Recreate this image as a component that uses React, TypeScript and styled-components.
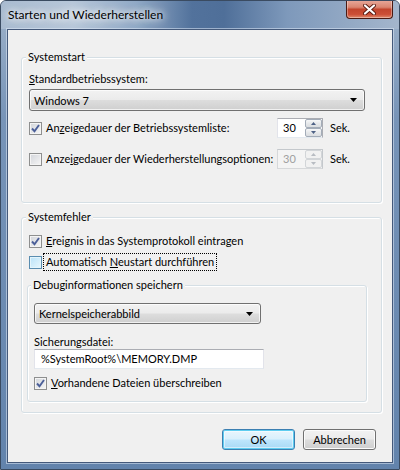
import React from 'react';
import styled, { createGlobalStyle, css } from 'styled-components';

const GlobalStyle = createGlobalStyle`
  html, body {
    margin: 0;
    padding: 0;
    background: #ffffff;
  }
  body {
    font-family: Lato, "Liberation Sans", sans-serif;
    font-size: 11px;
    color: #000;
  }
`;

const Window = styled.div`
  width: 400px;
  height: 470px;
  box-sizing: border-box;
  display: flex;
  flex-direction: column;
  border: 1px solid #3a4b61;
  border-radius: 6px 6px 0 0;
  background: linear-gradient(180deg, #9fb3ca 0%, #7794b8 25%, #6283ac 100%);
  overflow: hidden;
`;

const TitleBar = styled.div`
  height: 28px;
  flex: none;
  display: flex;
  align-items: flex-start;
  background: linear-gradient(
    90deg,
    #a9bbd0 0%,
    #b7c7d9 18%,
    #90a9c6 34%,
    #52729c 48%,
    #4f6f99 56%,
    #7e99bb 72%,
    #a4b6cc 100%
  );
`;

const Title = styled.div`
  flex: 1;
  padding-left: 7px;
  line-height: 28px;
  font-size: 12px;
  color: #000;
  text-shadow: 0 0 6px #fff, 0 0 10px rgba(255, 255, 255, 0.9), 0 0 14px rgba(255, 255, 255, 0.7);
`;

const CloseButton = styled.div`
  width: 47px;
  height: 19px;
  margin: -1px 6px 0 0;
  box-sizing: border-box;
  display: flex;
  align-items: center;
  justify-content: center;
  border: 1px solid #4a1a12;
  border-top: none;
  border-radius: 0 0 4px 4px;
  background: linear-gradient(180deg, #e8aa9c 0%, #d98570 40%, #c2452d 52%, #cc4f36 80%, #df8a6c 100%);
  box-shadow: inset 0 0 0 1px rgba(255, 255, 255, 0.35);
`;

const Body = styled.div`
  flex: 1;
  display: flex;
  padding: 0 6px 6px;
  min-height: 0;
`;

const Client = styled.div`
  flex: 1;
  display: flex;
  flex-direction: column;
  background: #f0f0f0;
  border: 1px solid #44597a;
  box-shadow: 0 0 0 1px rgba(220, 232, 245, 0.55);
  padding: 20px 10px 0 13px;
`;

const GroupBox = styled.fieldset<{ $top: number; $bottom: number; $left: number; $width?: number; $gap?: number; $shift?: number }>`
  margin: ${({ $gap = 0 }) => $gap}px 0 0 ${({ $shift = 0 }) => $shift}px;
  min-width: 0;
  width: ${({ $width }) => ($width ? `${$width}px` : 'auto')};
  box-sizing: border-box;
  border: 1px solid #d5dfe5;
  border-radius: 3px;
  box-shadow: inset 1px 1px 0 #fff, 1px 1px 0 #fff;
  padding: ${({ $top, $bottom, $left }) => `${$top}px 8px ${$bottom}px ${$left}px`};
  display: flex;
  flex-direction: column;
`;

const Legend = styled.legend`
  padding: 0 2px;
  margin-left: -3px;
  line-height: 14px;
  background: #f0f0f0;
`;

const Label = styled.div<{ $gap?: number }>`
  line-height: 14px;
  height: 14px;
  margin-top: ${({ $gap = 0 }) => $gap}px;
`;

const Key = styled.span`
  text-decoration: underline;
`;

const Combo = styled.div<{ $width?: number; $height: number; $gap?: number; $trail?: number }>`
  height: ${({ $height }) => $height}px;
  width: ${({ $width }) => ($width ? `${$width}px` : 'auto')};
  margin: ${({ $gap = 0 }) => $gap}px ${({ $trail = 0 }) => $trail}px 0 0;
  box-sizing: border-box;
  display: flex;
  align-items: center;
  padding: 0 7px 0 4px;
  border: 1px solid #707070;
  border-radius: 3px;
  background: linear-gradient(180deg, #f2f2f2 0%, #ebebeb 48%, #dddddd 52%, #cfcfcf 100%);
  box-shadow: inset 0 0 0 1px rgba(255, 255, 255, 0.7);
`;

const ComboText = styled.span`
  flex: 1;
`;

const CheckRow = styled.div<{ $gap?: number; $height?: number }>`
  display: flex;
  align-items: center;
  height: ${({ $height = 18 }) => $height}px;
  margin-top: ${({ $gap = 0 }) => $gap}px;
  white-space: nowrap;
`;

const TimeRow = styled.div<{ $gap?: number }>`
  display: grid;
  grid-template-columns: 241px 46px auto;
  column-gap: 7px;
  align-items: center;
  height: 20px;
  margin-top: ${({ $gap = 0 }) => $gap}px;
`;

const CheckLabel = styled.span<{ $focused?: boolean }>`
  margin-left: 3px;
  line-height: 14px;
  padding: 0 1px;
  ${({ $focused }) =>
    $focused &&
    css`
      outline: 1px dotted #000;
      outline-offset: 1px;
    `}
`;

const Box = styled.span<{ $hover?: boolean }>`
  width: 13px;
  height: 13px;
  flex: none;
  box-sizing: border-box;
  display: flex;
  align-items: center;
  justify-content: center;
  border: 1px solid ${({ $hover }) => ($hover ? '#5a8db0' : '#8e8f8f')};
  box-shadow: inset 0 0 0 1px ${({ $hover }) => ($hover ? '#e4f5fc' : '#f4f4f4')};
  background: ${({ $hover }) =>
    $hover
      ? 'linear-gradient(135deg, #b9e2f8 0%, #e8f7fd 100%)'
      : 'linear-gradient(135deg, #d2d5da 0%, #f6f6f6 100%)'};
`;

const SpinBox = styled.div<{ $disabled?: boolean }>`
  height: 20px;
  box-sizing: border-box;
  display: flex;
  border: 1px solid ${({ $disabled }) => ($disabled ? '#c4c8cc' : '#abadb3')};
  border-left-color: ${({ $disabled }) => ($disabled ? '#d6d8da' : '#e2e3ea')};
  border-bottom-color: ${({ $disabled }) => ($disabled ? '#d6d8da' : '#e3e9ef')};
  background: ${({ $disabled }) => ($disabled ? '#f4f4f4' : '#fff')};
  color: ${({ $disabled }) => ($disabled ? '#a0a0a0' : '#000')};
`;

const SpinValue = styled.span`
  flex: 1;
  padding-left: 5px;
  line-height: 18px;
`;

const SpinButtons = styled.div`
  width: 17px;
  display: flex;
  flex-direction: column;
`;

const SpinHalf = styled.div<{ $disabled?: boolean }>`
  flex: 1;
  display: flex;
  align-items: center;
  justify-content: center;
  border: 1px solid ${({ $disabled }) => ($disabled ? '#d2d5d8' : '#a3acb8')};
  border-radius: 2px;
  background: ${({ $disabled }) =>
    $disabled ? '#f1f1f1' : 'linear-gradient(180deg, #f6f7f8 0%, #e6e8ea 50%, #dadde0 100%)'};
`;

const Unit = styled.span`
  line-height: 14px;
`;

const TextField = styled.div<{ $width: number }>`
  width: ${({ $width }) => $width}px;
  height: 20px;
  box-sizing: border-box;
  padding-left: 6px;
  line-height: 18px;
  background: #fff;
  border: 1px solid #e2e3ea;
  border-top-color: #abadb3;
  border-bottom-color: #e3e9ef;
`;

const Footer = styled.div`
  display: flex;
  justify-content: flex-end;
  gap: 8px;
  margin-top: 16px;
  padding-right: 6px;
`;

const Button = styled.div<{ $default?: boolean }>`
  width: 73px;
  height: 21px;
  box-sizing: border-box;
  display: flex;
  align-items: center;
  justify-content: center;
  border-radius: 3px;
  ${({ $default }) =>
    $default
      ? css`
          border: 1px solid #3c7fb1;
          background: linear-gradient(180deg, #eaf6fd 0%, #d9f0fc 48%, #bee6fd 52%, #a7d9f5 100%);
          box-shadow: inset 0 0 0 1px #5fcdf0, inset 0 0 0 2px rgba(255, 255, 255, 0.5);
        `
      : css`
          border: 1px solid #707070;
          background: linear-gradient(180deg, #f2f2f2 0%, #ebebeb 48%, #dddddd 52%, #cfcfcf 100%);
          box-shadow: inset 0 0 0 1px #fcfcfc;
        `}
`;

const Arrow = () => (
  <svg width="7" height="4" viewBox="0 0 7 4">
    <path d="M0 0 H7 L3.5 4 Z" fill="#000" />
  </svg>
);

const CheckBox = ({ checked, hover }: { checked?: boolean; hover?: boolean }) => (
  <Box $hover={hover}>
    {checked && (
      <svg width="9" height="9" viewBox="0 0 9 9">
        <path d="M1 4.5 L3.5 7.2 L8 1" fill="none" stroke="#4b5f99" strokeWidth="1.9" />
      </svg>
    )}
  </Box>
);

const Spinner = ({ value, disabled }: { value: string; disabled?: boolean }) => {
  const color = disabled ? '#b8bcc2' : '#4d6185';
  return (
    <SpinBox $disabled={disabled}>
      <SpinValue>{value}</SpinValue>
      <SpinButtons>
        <SpinHalf $disabled={disabled}>
          <svg width="5" height="3" viewBox="0 0 5 3">
            <path d="M0 3 H5 L2.5 0 Z" fill={color} />
          </svg>
        </SpinHalf>
        <SpinHalf $disabled={disabled}>
          <svg width="5" height="3" viewBox="0 0 5 3">
            <path d="M0 0 H5 L2.5 3 Z" fill={color} />
          </svg>
        </SpinHalf>
      </SpinButtons>
    </SpinBox>
  );
};

const CloseIcon = () => (
  <svg width="13" height="11" viewBox="0 0 13 11">
    <path d="M2 1.5 L11 9.5 M11 1.5 L2 9.5" stroke="#5a1c12" strokeWidth="4" strokeLinecap="round" />
    <path d="M2 1.5 L11 9.5 M11 1.5 L2 9.5" stroke="#fff" strokeWidth="2.2" strokeLinecap="round" />
  </svg>
);

const App = () => (
  <>
    <GlobalStyle />
    <Window>
      <TitleBar>
        <Title>Starten und Wiederherstellen</Title>
        <CloseButton>
          <CloseIcon />
        </CloseButton>
      </TitleBar>
      <Body>
        <Client>
          <GroupBox $top={8} $bottom={33} $left={7}>
            <Legend>Systemstart</Legend>
            <Label>
              <Key>S</Key>tandardbetriebssystem:
            </Label>
            <Combo $height={22} $gap={3} $trail={8}>
              <ComboText>Windows 7</ComboText>
              <Arrow />
            </Combo>
            <TimeRow $gap={7}>
              <CheckRow $height={20}>
                <CheckBox checked />
                <CheckLabel>
                  An<Key>z</Key>eigedauer der Betriebssystemliste:
                </CheckLabel>
              </CheckRow>
              <Spinner value="30" />
              <Unit>Sek.</Unit>
            </TimeRow>
            <TimeRow $gap={11}>
              <CheckRow $height={20}>
                <CheckBox />
                <CheckLabel>
                  Anze<Key>i</Key>gedauer der Wiederherstellungsoptionen:
                </CheckLabel>
              </CheckRow>
              <Spinner value="30" disabled />
              <Unit>Sek.</Unit>
            </TimeRow>
          </GroupBox>

          <GroupBox $top={8} $bottom={10} $left={7} $gap={7}>
            <Legend>Systemfehler</Legend>
            <CheckRow>
              <CheckBox checked />
              <CheckLabel>
                <Key>E</Key>reignis in das Systemprotokoll eintragen
              </CheckLabel>
            </CheckRow>
            <CheckRow $gap={3}>
              <CheckBox hover />
              <CheckLabel $focused>
                Automatisch <Key>N</Key>eustart durchführen
              </CheckLabel>
            </CheckRow>
            <GroupBox $top={11} $bottom={9} $left={6} $width={340} $gap={7} $shift={-2}>
              <Legend>Debuginformationen speichern</Legend>
              <Combo $height={21} $width={227}>
                <ComboText>Kernelspeicherabbild</ComboText>
                <Arrow />
              </Combo>
              <Label $gap={11}>Sicherungsdatei:</Label>
              <TextField $width={230}>%SystemRoot%\MEMORY.DMP</TextField>
              <CheckRow $gap={5}>
                <CheckBox checked />
                <CheckLabel>
                  <Key>V</Key>orhandene Dateien überschreiben
                </CheckLabel>
              </CheckRow>
            </GroupBox>
          </GroupBox>

          <Footer>
            <Button $default>OK</Button>
            <Button>Abbrechen</Button>
          </Footer>
        </Client>
      </Body>
    </Window>
  </>
);

export default App;
